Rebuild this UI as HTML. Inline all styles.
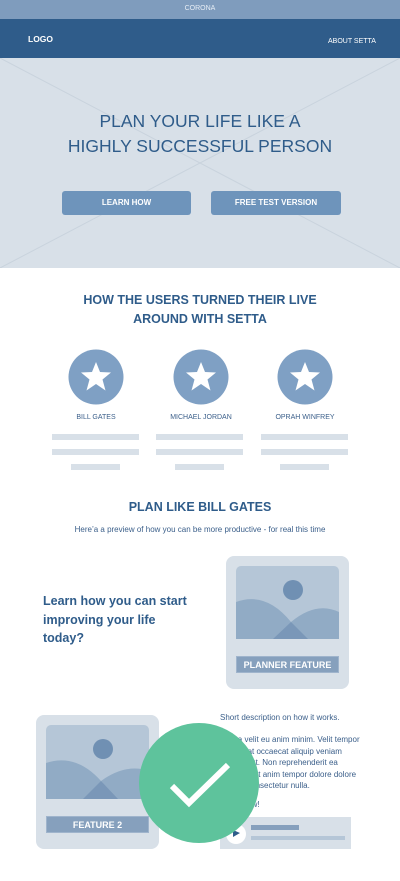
<!DOCTYPE html>
<html><head><meta charset="utf-8"><style>
*{margin:0;padding:0;box-sizing:border-box}
body{width:400px;height:881px;background:#fff;font-family:"Liberation Sans",sans-serif;position:relative;overflow:hidden}
.a{position:absolute}
.c{text-align:center;left:0;width:400px}
.bar{position:absolute;background:#d8e0e8;height:6px}
.card{position:absolute;background:#d8e0e8;border-radius:8px}
.lbl{position:absolute;background:#86a0bd;color:#fff;font-weight:bold;font-size:9px;text-align:center;line-height:16px;border:1px solid #9fb4cc}
.p{position:absolute;left:220px;font-size:8px;color:#3b5f8a;white-space:nowrap}
</style></head><body>
<div class="a" style="top:0;left:0;width:400px;height:19px;background:#7f9cbd;color:#e6edf5;font-size:7px;text-align:center;line-height:18px">CORONA</div>
<div class="a" style="top:19px;left:0;width:400px;height:39px;background:#2f5c8a"></div>
<div class="a" style="top:34px;left:28px;color:#fff;font-weight:bold;font-size:8.5px">LOGO</div>
<div class="a" style="top:38px;left:328px;color:#fff;font-size:7px">ABOUT SETTA</div>
<div class="a" style="top:58px;left:0;width:400px;height:210px;background:#d8e0e8"></div>
<svg class="a" style="top:58px;left:0" width="400" height="210"><path d="M0 0L400 210M400 0L0 210" stroke="#c9d3dd" stroke-width="1"/></svg>
<div class="a c" style="top:109px;font-size:17.5px;color:#2f5c8a;line-height:25px">PLAN YOUR LIFE LIKE A<br>HIGHLY SUCCESSFUL PERSON</div>
<div class="a" style="top:191px;left:62px;width:129px;height:24px;background:#6e94bb;border-radius:3px;color:#fff;font-weight:bold;font-size:8px;text-align:center;line-height:24px">LEARN HOW</div>
<div class="a" style="top:191px;left:211px;width:130px;height:24px;background:#6e94bb;border-radius:3px;color:#fff;font-weight:bold;font-size:8px;text-align:center;line-height:24px">FREE TEST VERSION</div>
<div class="a c" style="top:291px;font-size:12.5px;font-weight:bold;color:#2f5c8a;line-height:19px">HOW THE USERS TURNED THEIR LIVE<br>AROUND WITH SETTA</div>
<svg class="a" style="top:0;left:0" width="400" height="881">
<g fill="#7fa0c4"><circle cx="96" cy="377" r="27.5"/><circle cx="201" cy="377" r="27.5"/><circle cx="305" cy="377" r="27.5"/></g>
<g fill="#fff">
<path id="s" d="M96 362L100 372L111 372.5L102.5 379.5L105.5 390.5L96 384L86.5 390.5L89.5 379.5L81 372.5L92 372Z"/>
<use href="#s" x="105"/><use href="#s" x="209"/></g>
</svg>
<div class="a" style="top:414px;left:46px;width:100px;text-align:center;font-size:7px;color:#3b5f8a">BILL GATES</div>
<div class="a" style="top:414px;left:151px;width:100px;text-align:center;font-size:7px;color:#3b5f8a">MICHAEL JORDAN</div>
<div class="a" style="top:414px;left:255px;width:100px;text-align:center;font-size:7px;color:#3b5f8a">OPRAH WINFREY</div>
<div class="bar" style="top:434px;left:52px;width:87px"></div><div class="bar" style="top:449px;left:52px;width:87px"></div><div class="bar" style="top:464px;left:71px;width:49px"></div>
<div class="bar" style="top:434px;left:156px;width:87px"></div><div class="bar" style="top:449px;left:156px;width:87px"></div><div class="bar" style="top:464px;left:175px;width:49px"></div>
<div class="bar" style="top:434px;left:261px;width:87px"></div><div class="bar" style="top:449px;left:261px;width:87px"></div><div class="bar" style="top:464px;left:280px;width:49px"></div>
<div class="a c" style="top:500px;font-size:12.5px;font-weight:bold;color:#2f5c8a">PLAN LIKE BILL GATES</div>
<div class="a c" style="top:525px;font-size:8px;color:#3b5f8a">Here’a a preview of how you can be more productive - for real this time</div>
<div class="a" style="top:592px;left:43px;font-size:12.5px;font-weight:bold;color:#2f5c8a;line-height:18.5px">Learn how you can start<br>improving your life<br>today?</div>
<div class="card" style="left:226px;top:556px;width:123px;height:133px"></div>
<svg class="a" style="left:236px;top:566px" width="103" height="73"><rect width="103" height="73" rx="5" fill="#b5c6d7"/><path d="M0 36Q30 25 55 56Q80 35 103 46V73H0Z" fill="#91abc5"/><path d="M55 56L72 73H37Z" fill="#7a97b8"/><circle cx="57" cy="24" r="10" fill="#7090b3"/></svg>
<div class="lbl" style="left:236px;top:656px;width:103px;height:17px">PLANNER FEATURE</div>
<div class="card" style="left:36px;top:715px;width:123px;height:134px"></div>
<svg class="a" style="left:46px;top:725px" width="103" height="74"><rect width="103" height="74" rx="5" fill="#b5c6d7"/><path d="M0 38Q30 28 55 56Q80 38 103 46V74H0Z" fill="#91abc5"/><path d="M55 56L72 74H37Z" fill="#7a97b8"/><circle cx="57" cy="24" r="10" fill="#7090b3"/></svg>
<div class="lbl" style="left:46px;top:816px;width:103px;height:17px">FEATURE 2</div>
<div class="p" style="top:713px">Short description on how it works.</div>
<div class="p" style="top:734px;line-height:11.5px">Aliqua velit eu anim minim. Velit tempor<br>Cupidatat occaecat aliquip veniam<br>laborum ut. Non reprehenderit ea<br>Laborum ut anim tempor dolore dolore<br>Et sunt consectetur nulla.</div>
<div class="p" style="top:800px">Learn now!</div>
<div class="a" style="left:220px;top:817px;width:131px;height:32px;background:#d8e0e8"></div>
<div class="a" style="left:226px;top:824px;width:20px;height:20px;border-radius:50%;background:#fff"></div>
<div class="a" style="left:251px;top:825px;width:48px;height:5px;background:#86a0bd"></div>
<div class="a" style="left:251px;top:836px;width:94px;height:4px;background:#b5c6d7"></div>
<svg class="a" style="left:0;top:0" width="400" height="881"><path d="M233 830L240 833L233 837Z" fill="#2f5c8a"/><circle cx="199" cy="783" r="60" fill="#5ec39c"/><path d="M172 786L189 803L228 765" stroke="#fff" stroke-width="6" fill="none"/></svg>
</body></html>
